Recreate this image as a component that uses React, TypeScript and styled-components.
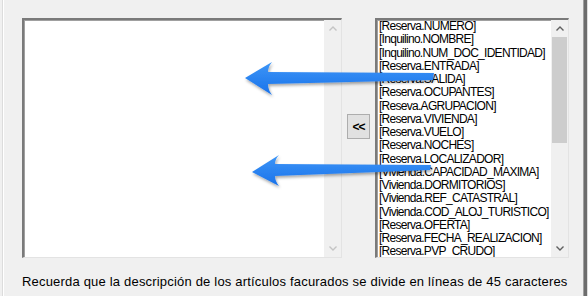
import styled, { createGlobalStyle } from 'styled-components';

const GlobalStyle = createGlobalStyle`
     html, body {
          margin: 0;
          padding: 0;
          background: #f0f0f0;
     }
     * {
          box-sizing: border-box;
     }
`;

const fields = [
     '[Reserva.NUMERO]',
     '[Inquilino.NOMBRE]',
     '[Inquilino.NUM_DOC_IDENTIDAD]',
     '[Reserva.ENTRADA]',
     '[Reserva.SALIDA]',
     '[Reserva.OCUPANTES]',
     '[Reseva.AGRUPACION]',
     '[Reserva.VIVIENDA]',
     '[Reserva.VUELO]',
     '[Reserva.NOCHES]',
     '[Reserva.LOCALIZADOR]',
     '[Vivienda.CAPACIDAD_MAXIMA]',
     '[Vivienda.DORMITORIOS]',
     '[Vivienda.REF_CATASTRAL]',
     '[Vivienda.COD_ALOJ_TURISTICO]',
     '[Reserva.OFERTA]',
     '[Reserva.FECHA_REALIZACION]',
     '[Reserva.PVP_CRUDO]',
     '[Reserva.PVP_CON_IVA]',
];

const Frame = styled.div`
     position: relative;
     height: 296px;
     overflow: hidden;
     background: #f0f0f0;
     font-family: 'Liberation Sans', Arial, sans-serif;
     border-left: 1px solid #dcdcdc;
     margin-left: 2px;
     width: 586px;

     &::before {
          content: '';
          position: absolute;
          left: 0;
          top: 0;
          bottom: 0;
          width: 1px;
          background: #ffffff;
     }

     &::after {
          content: '';
          position: absolute;
          right: 0;
          top: 0;
          bottom: 0;
          width: 3px;
          border-left: 1px solid #a0a0a0;
          border-right: 1px solid #dcdcdc;
          background: #6d6d6d;
          background-clip: content-box;
     }
`;

const Body = styled.div`
     display: flex;
     flex-direction: column;
     padding: 18px 0 0 19px;
`;

const Row = styled.div`
     display: flex;
     gap: 5px;
     height: 240px;
`;

const Sunken = styled.div<{ $width: number }>`
     display: flex;
     width: ${(p) => p.$width}px;
     height: 100%;
     background: #ffffff;
     border-top: 2px solid #7a7a7a;
     border-left: 2px solid #7a7a7a;
     border-right: 1px solid #e3e3e3;
     border-bottom: 1px solid #e3e3e3;
     box-shadow: inset 1px 1px 0 #a0a0a0;
     overflow: hidden;
`;

const TextArea = styled.div`
     flex: 1;
`;

const ScrollBar = styled.div`
     display: flex;
     flex-direction: column;
     justify-content: space-between;
     width: 17px;
     flex-shrink: 0;
     background: #f0f0f0;
`;

const ArrowCell = styled.div`
     display: flex;
     align-items: center;
     justify-content: center;
     height: 17px;
     flex-shrink: 0;
`;

const Track = styled.div`
     flex: 1;
     display: flex;
     flex-direction: column;
     padding: 0 1px;
`;

const Thumb = styled.div`
     height: 106px;
     background: #cdcdcd;
`;

const SwapButton = styled.button`
     align-self: flex-start;
     margin-top: 96px;
     width: 23px;
     height: 25px;
     padding: 0;
     background: #e1e1e1;
     border: 1px solid #adadad;
     border-radius: 0;
     font-family: 'Liberation Sans', Arial, sans-serif;
     font-size: 12px;
     font-weight: bold;
     color: #000;
     letter-spacing: -1px;
     cursor: pointer;
`;

const List = styled.ul`
     flex: 1;
     min-width: 0;
     height: 237px;
     margin: 0;
     padding: 0 0 0 2px;
     list-style: none;
     overflow: hidden;
     font-size: 12px;
     color: #000;
`;

const Item = styled.li`
     line-height: 13.25px;
     height: 13.25px;
     white-space: nowrap;
     letter-spacing: -0.72px;
`;

const Note = styled.p`
     margin: 16px 0 0 0;
     font-size: 13px;
     letter-spacing: 0.19px;
     color: #000;
     white-space: nowrap;
`;

const Overlay = styled.svg`
     position: absolute;
     left: -3px;
     top: 0;
     pointer-events: none;
`;

const Chevron: React.FC<{ down?: boolean; color: string }> = ({ down, color }) => (
     <svg width='8' height='5' viewBox='0 0 8 5'>
          <polyline
               points={down ? '0.5,0.5 4,4 7.5,0.5' : '0.5,4.5 4,1 7.5,4.5'}
               fill='none'
               stroke={color}
               strokeWidth='1.4'
          />
     </svg>
);

const App: React.FC = () => {
     return (
          <Frame>
               <GlobalStyle />
               <Body>
                    <Row>
                         <Sunken $width={320}>
                              <TextArea />
                              <ScrollBar>
                                   <ArrowCell>
                                        <Chevron color='#c4c4c4' />
                                   </ArrowCell>
                                   <ArrowCell>
                                        <Chevron down color='#c4c4c4' />
                                   </ArrowCell>
                              </ScrollBar>
                         </Sunken>

                         <SwapButton>&lt;&lt;</SwapButton>

                         <Sunken $width={194}>
                              <List>
                                   {fields.map((f) => (
                                        <Item key={f}>{f}</Item>
                                   ))}
                              </List>
                              <ScrollBar>
                                   <ArrowCell>
                                        <Chevron color='#606060' />
                                   </ArrowCell>
                                   <Track>
                                        <Thumb />
                                   </Track>
                                   <ArrowCell>
                                        <Chevron down color='#606060' />
                                   </ArrowCell>
                              </ScrollBar>
                         </Sunken>
                    </Row>

                    <Note>
                         Recuerda que la descripción de los artículos facurados se
                         divide en líneas de 45 caracteres
                    </Note>
               </Body>

               <Overlay width='588' height='296' viewBox='0 0 588 296'>
                    <defs>
                         <linearGradient id='blue' x1='0' y1='0' x2='0' y2='1'>
                              <stop offset='0' stopColor='#3d96f7' />
                              <stop offset='1' stopColor='#1a72ea' />
                         </linearGradient>
                         <filter id='shadow' x='-10%' y='-30%' width='120%' height='180%'>
                              <feDropShadow dx='1' dy='2' stdDeviation='1.5' floodColor='#000' floodOpacity='0.35' />
                         </filter>
                    </defs>
                    <path
                         d='M245 78 L272 62 Q268 67 268 72 L434 73 L433 80 L268 84 Q268 90 272 95 Z'
                         fill='url(#blue)'
                         filter='url(#shadow)'
                    />
                    <path
                         d='M252 172 L279 155 Q275 159 275 164 L431 165 L430 170 L275 176 Q275 181 279 186 Z'
                         fill='url(#blue)'
                         filter='url(#shadow)'
                    />
               </Overlay>
          </Frame>
     );
};

export default App;
